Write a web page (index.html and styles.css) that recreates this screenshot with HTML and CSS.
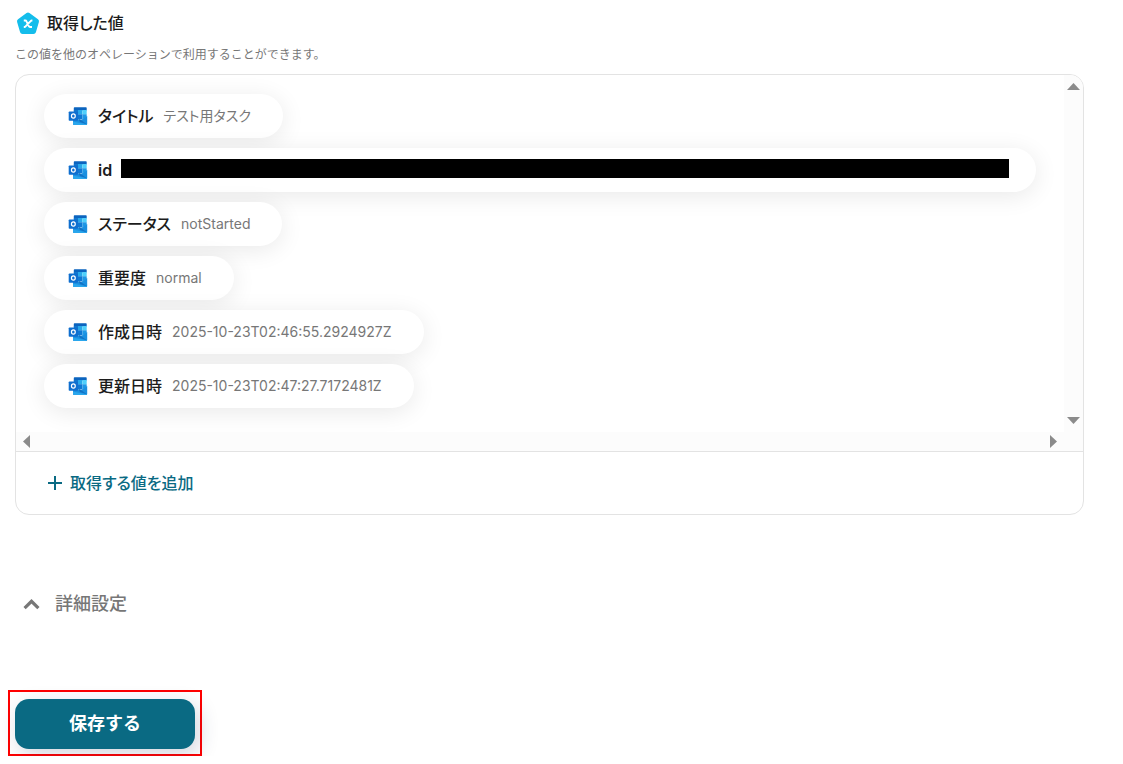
FILE: index.html
```html
<!DOCTYPE html>
<html lang="ja">
<head>
<meta charset="utf-8">
<title>取得した値</title>
<link rel="stylesheet" href="styles.css">
</head>
<body>
<svg class="defs" aria-hidden="true">
  <symbol id="mail" viewBox="0 0 20 20">
    <path fill="#0b64bf" d="M6.500 1.300H18q.7 0 .7.700v2.500H5.800V2q0-.7.700-.7z"/>
    <path fill="#1277cf" d="M5.800 4H10v8H5.800z"/>
    <path fill="#28a8ea" d="M10 4h4.400v4.200H10z"/>
    <path fill="#50d0fb" d="M14.400 4h4.300v4.200h-4.300z"/>
    <path fill="#0f78d4" d="M10 8.200h4.400v5.300H10z"/>
    <path fill="#1e98e6" d="M14.400 8.200h4.300v3l-4.300 2.300z"/>
    <path fill="#1a8fe0" d="M19.200 10v8q0 1-1 1H6q-1 0-1-1v-5l8 1.300z"/>
    <path fill="#1272c4" d="M10 12.500l3 1.500 6.100 4.400-7.100-2.400z"/>
    <path fill="#2aa6ec" d="M5 15.500 19 18.500q-.3.500-.8.500H6q-1 0-1-1z"/>
    <rect x=".7" y="5.400" width="9.300" height="9.300" rx=".8" fill="#0f6fcf"/>
    <ellipse cx="5.350" cy="10" rx="1.900" ry="2.100" fill="none" stroke="#fff" stroke-width="1.200"/>
  </symbol>
</svg>
<main class="page">
  <section>
    <h2 class="heading">
      <svg class="badge" viewBox="0 0 24 24" aria-hidden="true">
        <path d="M12 4 20.500 10.200 17.500 20.500H6.500L3.500 10.200Z" fill="#14bdeb" stroke="#14bdeb" stroke-width="5" stroke-linejoin="round"/>
        <path d="M7.800 9.500h1.500q.8 0 1.200.9l2.300 4.700q.4.900 1.200.9h2M16.400 9.500h-.6q-.7 0-1.200.6l-5 5.300q-.5.600-1.200.600h-.6" fill="none" stroke="#fff" stroke-width="1.900"/>
      </svg>
      取得した値
    </h2>
    <p class="note">この値を他のオペレーションで利用することができます。</p>
    <div class="panel">
      <div class="scroller">
        <ul class="values">
          <li class="pill"><svg class="icon"><use href="#mail"/></svg><span class="name">タイトル</span><span class="value">テスト用タスク</span></li>
          <li class="pill wide"><svg class="icon"><use href="#mail"/></svg><span class="name latin">id</span><span class="redacted"></span></li>
          <li class="pill"><svg class="icon"><use href="#mail"/></svg><span class="name">ステータス</span><span class="value">notStarted</span></li>
          <li class="pill"><svg class="icon"><use href="#mail"/></svg><span class="name">重要度</span><span class="value">normal</span></li>
          <li class="pill"><svg class="icon"><use href="#mail"/></svg><span class="name">作成日時</span><span class="value">2025-10-23T02:46:55.2924927Z</span></li>
          <li class="pill"><svg class="icon"><use href="#mail"/></svg><span class="name">更新日時</span><span class="value">2025-10-23T02:47:27.7172481Z</span></li>
        </ul>
        <div class="bar vertical">
          <svg class="arrow-v" viewBox="0 0 13 7"><path d="M0 7 6.500 0 13 7z"/></svg>
          <svg class="arrow-v" viewBox="0 0 13 7"><path d="M0 0 6.500 7 13 0z"/></svg>
        </div>
        <div class="bar horizontal">
          <svg class="arrow-h" viewBox="0 0 7 13"><path d="M7 0 0 6.500 7 13z"/></svg>
          <svg class="arrow-h" viewBox="0 0 7 13"><path d="M0 0 7 6.500 0 13z"/></svg>
        </div>
        <div class="bar"></div>
      </div>
      <div class="footer">
        <button class="add" type="button">
          <svg class="plus" viewBox="0 0 16 16" aria-hidden="true"><path d="M8 1v14M1 8h14"/></svg>
          取得する値を追加
        </button>
      </div>
    </div>
  </section>
  <button class="details" type="button">
    <svg class="chevron" viewBox="0 0 16 10" aria-hidden="true"><path d="M1.500 8.500 8 2l6.500 6.500"/></svg>
    詳細設定
  </button>
  <div class="highlight"><button class="save" type="button">保存する</button></div>
</main>
</body>
</html>
```
FILE: styles.css
```css
* { box-sizing: border-box; }
body {
  margin: 0;
  background: #fff;
  color: #1c1c1c;
  font-family: Inter, "Noto Sans CJK JP", sans-serif;
  font-feature-settings: "palt";
  font-size: 16px;
  line-height: 24px;
}
button {
  border: 0;
  background: none;
  padding: 0;
  font: inherit;
  font-feature-settings: inherit;
  cursor: pointer;
}
.defs { display: none; }
.page { padding: 11px 39px 0 15px; overflow: hidden; }
.heading {
  display: flex;
  align-items: center;
  gap: 7px;
  margin: 0;
  padding-left: 1px;
  font-size: 16px;
  font-weight: 500;
}
.badge { width: 24px; height: 24px; }
.note {
  margin: 10px 0 9px;
  color: #777;
  font-size: 12px;
  font-feature-settings: normal;
  line-height: 20px;
}
.panel { border: 1px solid #e3e3e3; border-radius: 14px; overflow: hidden; }
.scroller {
  display: grid;
  grid-template-columns: 1fr 19px;
  grid-template-rows: 1fr 19px;
}
.values {
  display: flex;
  flex-direction: column;
  align-items: flex-start;
  gap: 10px;
  margin: 0;
  padding: 19px 28px 24px;
  list-style: none;
  overflow: hidden;
}
.pill {
  display: flex;
  align-items: center;
  height: 44px;
  padding: 0 32px 0 24px;
  border-radius: 22px;
  background: #fff;
  box-shadow: 0 4px 24px rgba(0, 0, 0, 0.09);
}
.wide { align-self: stretch; padding-right: 27px; }
.icon { width: 20px; height: 20px; flex: none; }
.name { margin: 0 10px; font-weight: 500; white-space: nowrap; }
.latin { margin-right: 9px; font-weight: 600; }
.value { font-size: 14px; color: #777; white-space: nowrap; }
.redacted { flex: 1; height: 19px; margin-bottom: 4px; background: #000; }
.bar { display: flex; background: #fcfcfc; fill: #8b8b8b; justify-content: space-between; align-items: center; }
.vertical { flex-direction: column; padding: 8px 0; }
.horizontal { padding: 0 7px; }
.arrow-v { width: 13px; height: 7px; }
.arrow-h { width: 7px; height: 13px; }
.footer { border-top: 1px solid #e3e3e3; padding: 19px 31px; }
.add {
  display: flex;
  align-items: center;
  gap: 7px;
  color: #0a6a83;
  font-weight: 500;
}
.plus { width: 16px; height: 16px; fill: none; stroke: currentColor; stroke-width: 2; }
.details {
  display: flex;
  align-items: center;
  gap: 15px;
  margin: 77px 0 0 8px;
  color: #777;
  font-size: 18px;
  font-weight: 500;
}
.chevron { width: 17px; height: 11px; fill: none; stroke: currentColor; stroke-width: 3; }
.highlight {
  width: fit-content;
  margin: 74px 0 0 -7px;
  padding: 7px 5px 5px;
  border: 2px solid #f00;
}
.save {
  display: block;
  width: 180px;
  height: 50px;
  border-radius: 14px;
  background: #0a6a83;
  box-shadow: 4px 6px 20px rgba(30, 50, 90, 0.2);
  color: #fff;
  font-size: 18px;
  font-weight: 700;
  font-feature-settings: normal;
}
```
